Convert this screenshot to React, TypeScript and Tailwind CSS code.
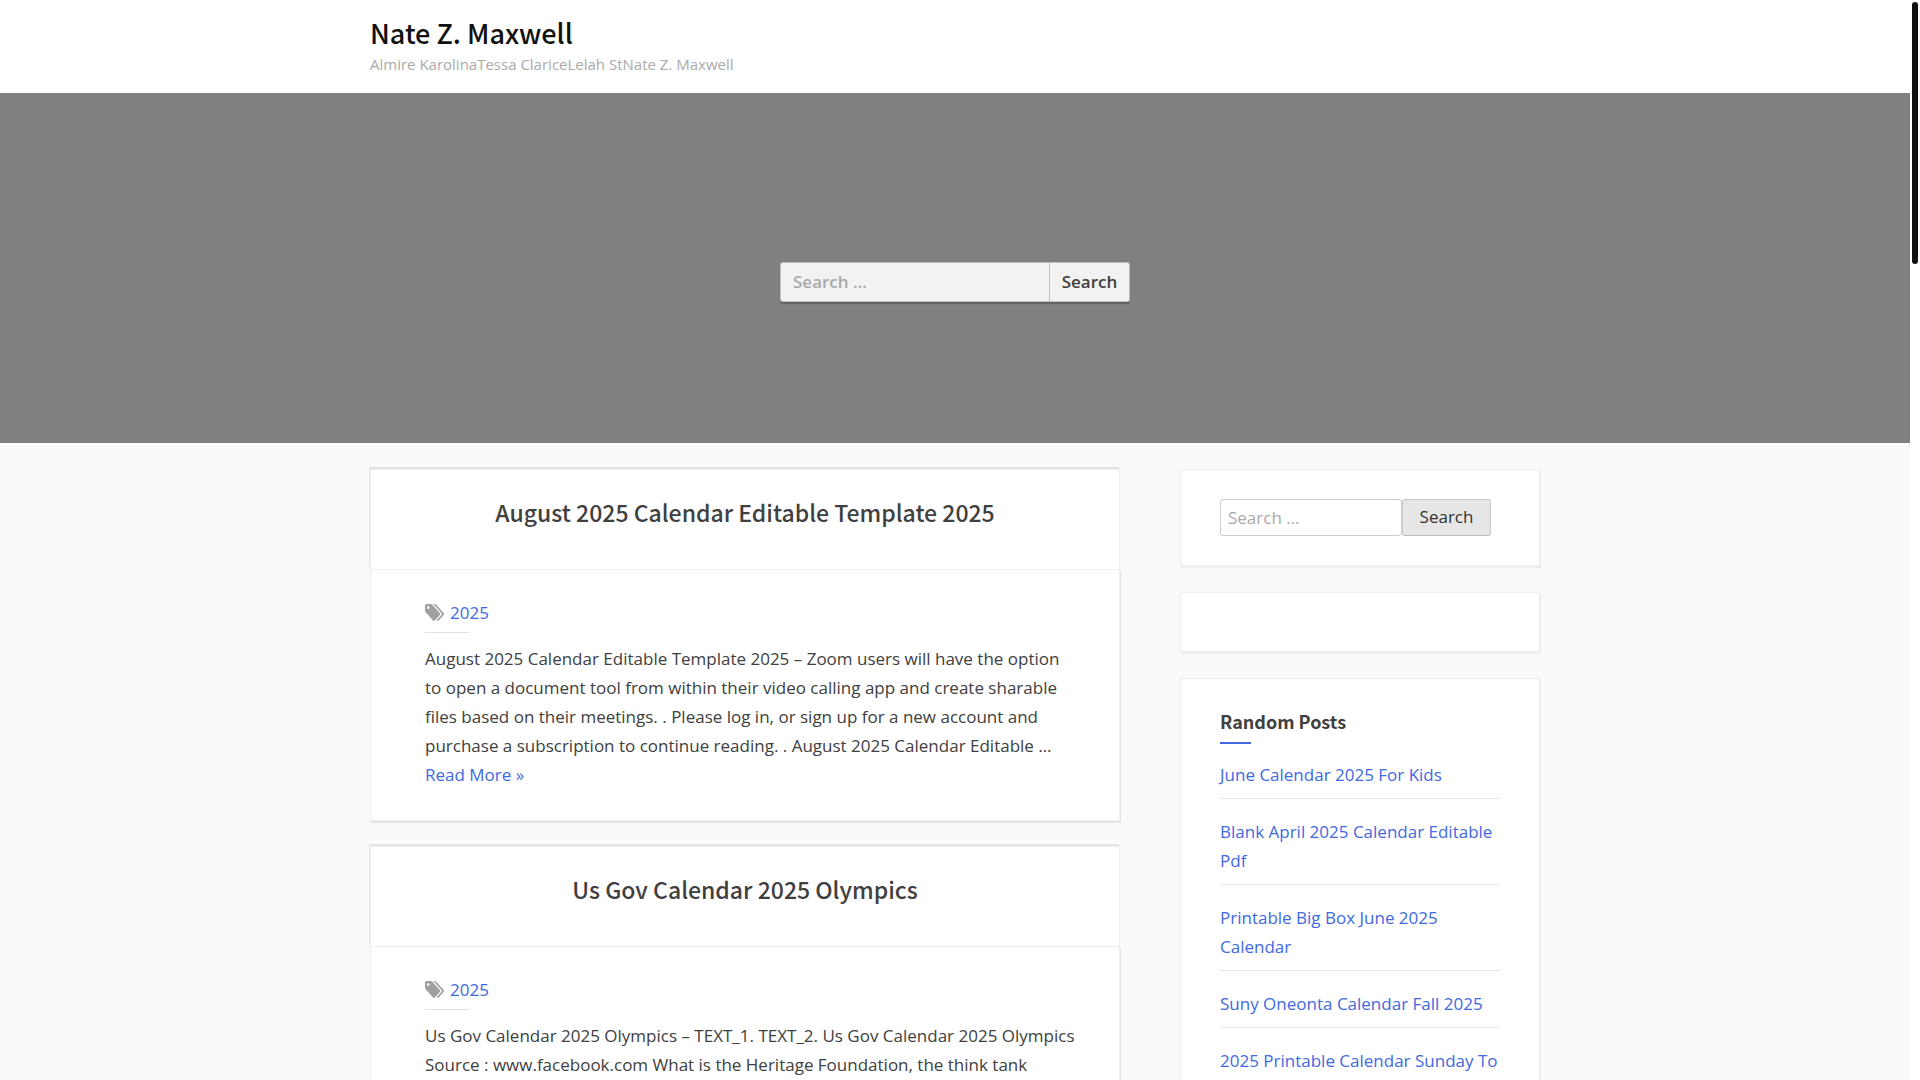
import type { ReactNode } from "react";

const posts = [
  {
    title: "August 2025 Calendar Editable Template 2025",
    tag: "2025",
    excerpt:
      "August 2025 Calendar Editable Template 2025 – Zoom users will have the option\nto open a document tool from within their video calling app and create sharable\nfiles based on their meetings. . Please log in, or sign up for a new account and\npurchase a subscription to continue reading. . August 2025 Calendar Editable …",
  },
  {
    title: "Us Gov Calendar 2025 Olympics",
    tag: "2025",
    excerpt:
      "Us Gov Calendar 2025 Olympics – TEXT_1. TEXT_2. Us Gov Calendar 2025 Olympics\nSource : www.facebook.com What is the Heritage Foundation, the think tank",
  },
];

const randomPosts = [
  "June Calendar 2025 For Kids",
  "Blank April 2025 Calendar Editable Pdf",
  "Printable Big Box June 2025 Calendar",
  "Suny Oneonta Calendar Fall 2025",
  "2025 Printable Calendar Sunday To",
];

function TagsIcon() {
  return (
    <svg viewBox="0 128 1900 1516" preserveAspectRatio="none" className="h-[17px] w-[19px] fill-[#a0a0a0]" aria-hidden="true">
      <path d="M448 448q0-53-37.5-90.5t-90.5-37.5-90.5 37.5-37.5 90.5 37.5 90.5 90.5 37.5 90.5-37.5 37.5-90.5zm1067 576q0 53-37 90l-491 492q-39 37-91 37-53 0-90-37l-715-716q-38-37-64.5-101t-26.5-117v-416q0-52 38-90t90-38h416q53 0 117 26.5t102 64.5l715 714q37 39 37 91zm384 0q0 53-37 90l-491 492q-39 37-91 37-36 0-59-14t-53-45l470-470q37-37 37-90 0-52-37-91l-715-714q-38-38-102-64.5t-117-26.5h224q53 0 117 26.5t102 64.5l715 714q37 39 37 91z" />
    </svg>
  );
}

function Post({ title, tag, excerpt }: { title: string; tag: string; excerpt: string }) {
  return (
    <article className="mb-[25px]">
      <header className="h-[100px] border border-b-0 border-[#eeeeee] bg-white px-[54px] pt-6 text-center shadow-[-1px_-2px_0_#e4e4e4]">
        <h2 className="font-['Noto_Sans_CJK_JP',sans-serif] text-[23px] leading-9 font-medium">
          <a href="#">{title}</a>
        </h2>
      </header>
      <div className="border border-[#eeeeee] bg-white pt-7 pr-8 pb-[31px] pl-[54px] shadow-[1px_2px_0_#e4e4e4]">
        <div className="flex items-center gap-[6px]">
          <TagsIcon />
          <a href="#" className="text-[#4169e1]">{tag}</a>
        </div>
        <div className="mt-[5px] mb-[11px] h-px w-11 bg-[#e0e0e0]" />
        <p className="whitespace-pre-line">
          {excerpt}{" "}
          <a href="#" className="inline-block text-[#4169e1]">Read More »</a>
        </p>
      </div>
    </article>
  );
}

function Widget({ children }: { children?: ReactNode }) {
  return (
    <section className="mb-[26px] min-h-[60px] border border-[#eeeeee] bg-white px-[39px] py-[29px] shadow-[1px_2px_0_#eeeeee]">
      {children}
    </section>
  );
}

export default function App() {
  return (
    <div className="flex h-screen overflow-hidden bg-white font-['Open_Sans',sans-serif] text-[17px] leading-[29px] text-[#404040]">
      <div className="min-w-0 flex-1 bg-[#fafafa]">
        <header className="bg-white">
          <div className="mx-auto max-w-[1170px] pt-[15px] pb-[15px]">
            <h1 className="font-['Noto_Sans_CJK_JP',sans-serif] text-[27px] leading-9 font-medium text-[#111111]">
              <a href="#">Nate Z. Maxwell</a>
            </h1>
            <p className="text-[15px] leading-[27px] text-[#aaaaaa]">Almire KarolinaTessa ClariceLelah StNate Z. Maxwell</p>
          </div>
        </header>

        <div className="flex h-[350px] items-center justify-center bg-[#808080] pt-7">
          <form className="flex h-10 w-[350px] rounded-[3px] shadow-[0_2px_1px_rgba(0,0,0,0.25)]">
            <input
              type="search"
              aria-label="Search for"
              placeholder="Search …"
              className="min-w-0 flex-1 rounded-l-[3px] border border-[#c0c0c0] bg-[#f2f2f2] px-3 pb-[2px] font-semibold placeholder:text-[#a9a9a9]"
            />
            <button type="button" className="w-20 rounded-r-[3px] border border-l-0 border-[#c0c0c0] bg-[#f2f2f2] pb-[2px] font-semibold">
              Search
            </button>
          </form>
        </div>

        <div className="mx-auto flex max-w-[1170px] gap-[60px] pt-[26px]">
          <main className="min-w-0 flex-1">
            {posts.map((post) => (
              <Post key={post.title} {...post} />
            ))}
          </main>
          <aside className="w-[360px] shrink-0">
            <Widget>
              <form className="flex h-[37px]">
                <input
                  type="search"
                  aria-label="Search the site"
                  placeholder="Search …"
                  className="w-[182px] rounded-[3px] border border-[#cccccc] bg-white px-[7px] placeholder:text-[#a9a9a9]"
                />
                <button
                  type="button"
                  className="w-[89px] rounded-[3px] border border-[#cccccc] border-b-[#bbbbbb] bg-[#e6e6e6] pb-[2px] text-[#333333]"
                >
                  Search
                </button>
              </form>
            </Widget>
            <Widget />
            <Widget>
              <h2 className="font-['Noto_Sans_CJK_JP',sans-serif] text-lg leading-[26px] font-bold">Random Posts</h2>
              <div className="mt-2 mb-4 h-[2px] w-[31px] bg-[#4169e1]" />
              <ul>
                {randomPosts.map((title) => (
                  <li key={title} className="mb-[18px] border-b border-[#e6e6e6] pb-[9px]">
                    <a href="#" className="text-[#4169e1]">{title}</a>
                  </li>
                ))}
              </ul>
            </Widget>
          </aside>
        </div>
      </div>
      <div className="w-[10px] shrink-0 px-[2px] pt-[2px]" aria-hidden="true">
        <div className="h-[262px] w-[6px] rounded-full bg-[#111111]" />
      </div>
    </div>
  );
}
